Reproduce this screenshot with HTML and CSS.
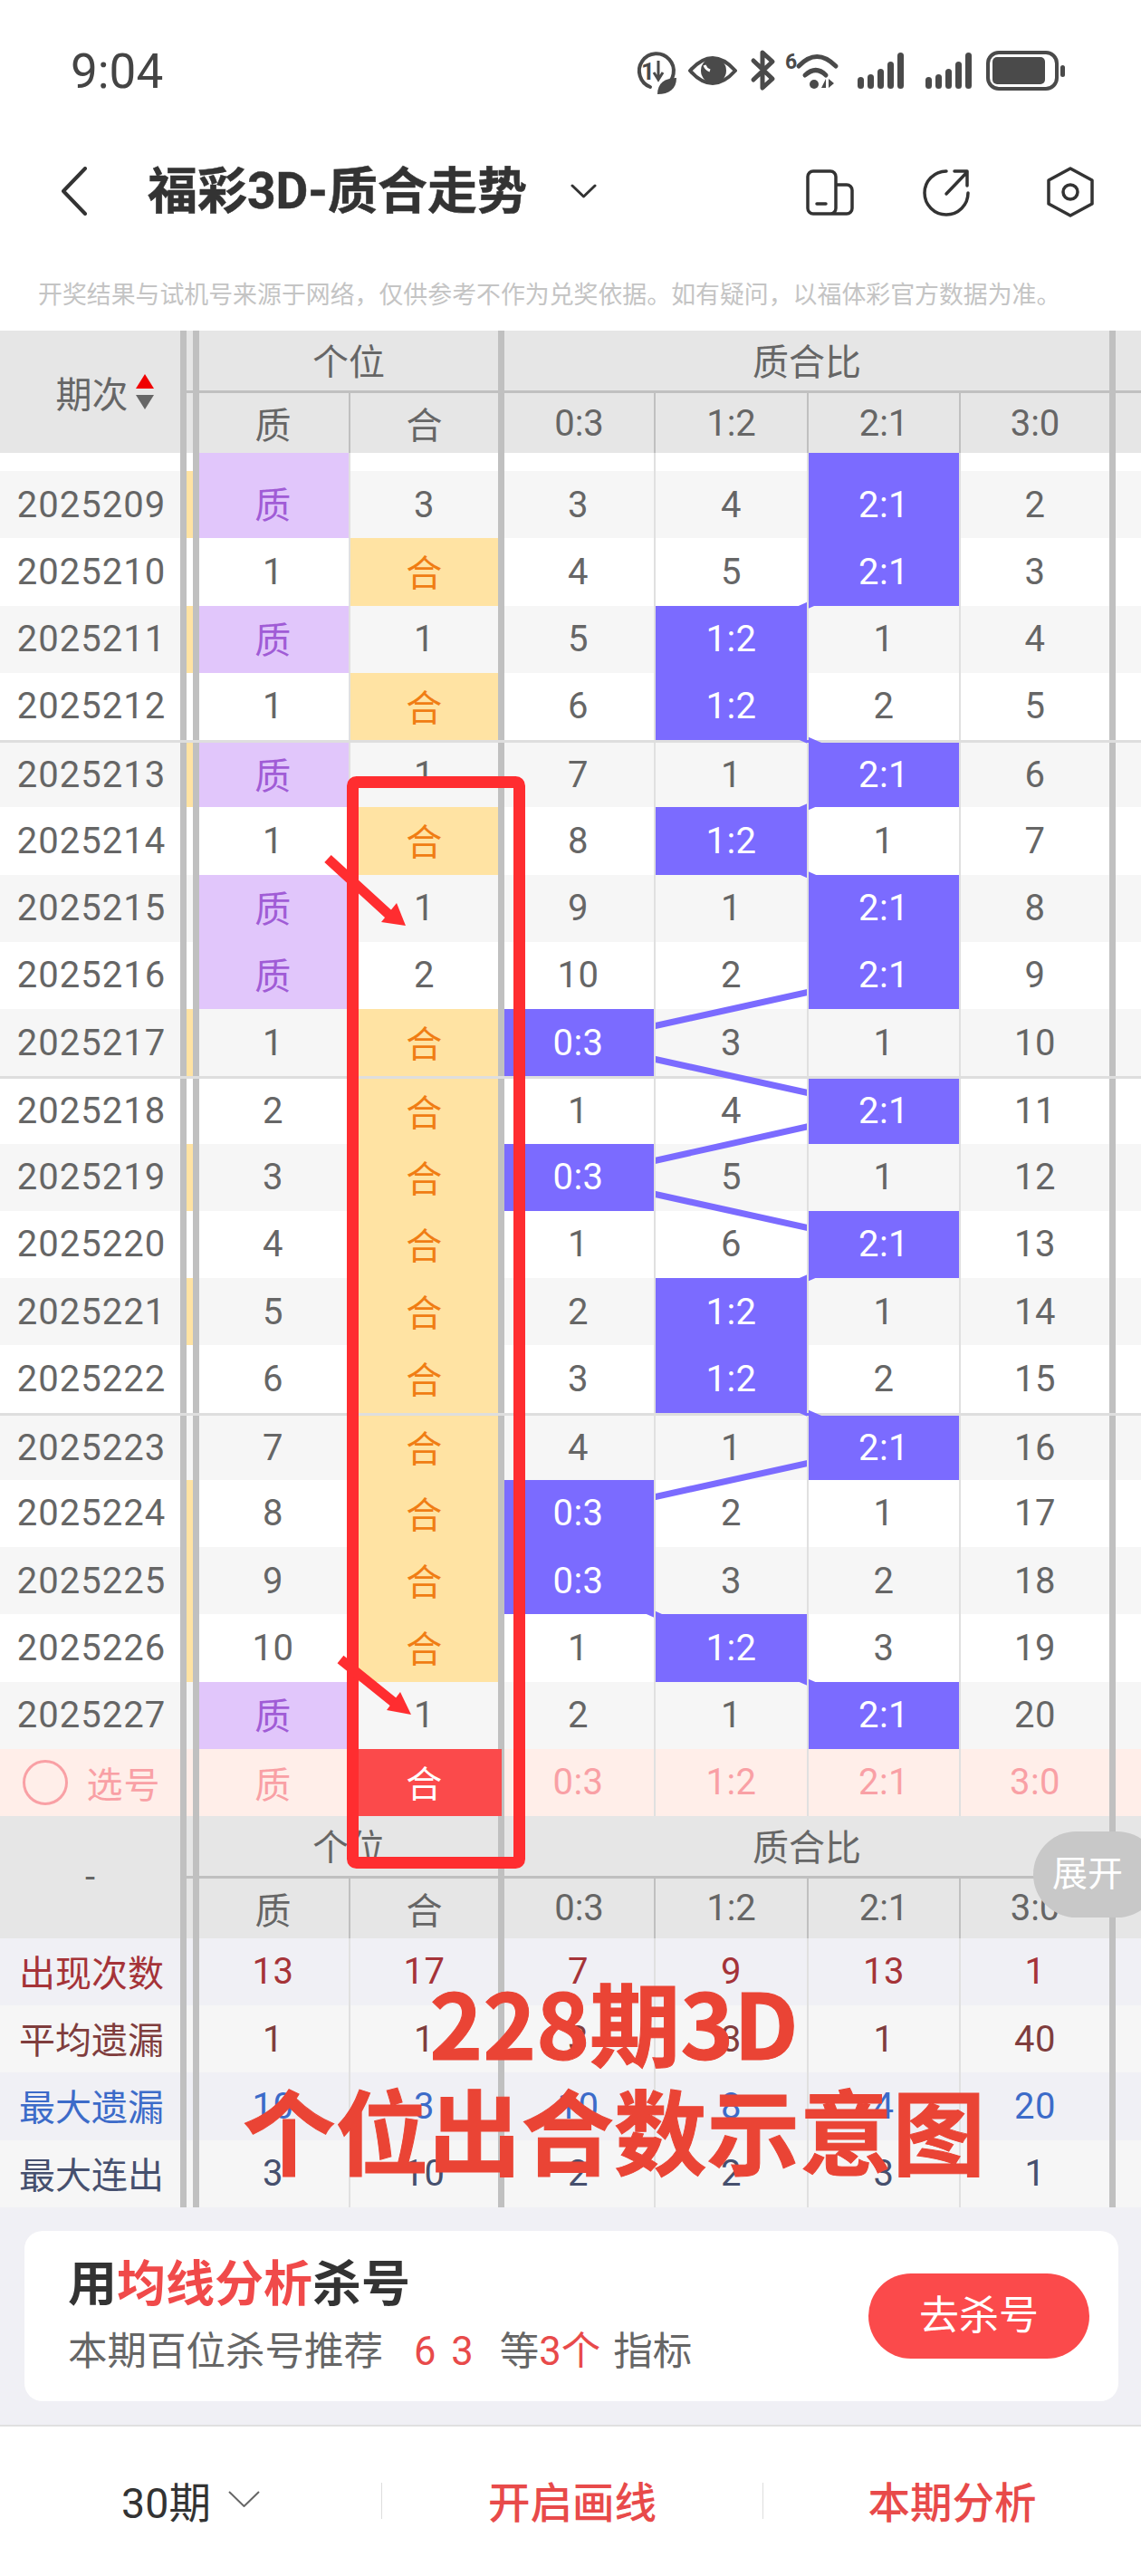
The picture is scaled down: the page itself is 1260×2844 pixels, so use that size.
FILE: index.html
```html
<!doctype html>
<html lang="zh-CN">
	<head>
		<meta charset="UTF-8">
		<title>福彩3D-质合走势</title>
		<link rel="stylesheet" href="styles.css">
	</head>
	<body>
		<div class="page">
			<div class="status">
				<span class="time">9:04</span>
				<svg class="status-icons" width="500" height="65" viewBox="0 0 500 65">
					<path class="st" d="M44 50A19 19 0 1 0 28 51"/>
					<text class="st-txt" x="18" y="43" font-size="26">1</text>
					<path class="st-thin" d="M37 22V42M32 35L37 43L42 35"/>
					<path class="st-fill" d="M36 59C36 47 44 41 57 41C57 53 49 59 36 59Z"/>
					<path class="st" d="M72 33Q97 5 122 33Q97 61 72 33Z"/>
					<circle class="st-fill" cx="98" cy="33" r="14"/>
					<path class="st-gap" d="M88 27A10 10 0 0 0 94 33"/>
					<path class="st st-bold" d="M142 22L163 42L152 52V13L163 23L142 43"/>
					<text class="st-txt" x="177" y="31" font-size="23">6</text>
					<path class="st st-bold" d="M192 28Q212 7 233 28M199 38Q211 27 222 38"/>
					<circle class="st-fill" cx="209" cy="48" r="5"/>
					<path class="st-fill" d="M217 52L222 42V52ZM225 42L231 47L225 52Z"/>
					<rect class="st-fill" x="257" y="40" width="7" height="13" rx="3.5"/>
					<rect class="st-fill" x="268" y="37" width="7" height="16" rx="3.5"/>
					<rect class="st-fill" x="279" y="31" width="7" height="22" rx="3.5"/>
					<rect class="st-fill" x="290" y="23" width="7" height="30" rx="3.5"/>
					<rect class="st-fill" x="301" y="13" width="7" height="40" rx="3.5"/>
					<rect class="st-fill" x="332" y="40" width="7" height="13" rx="3.5"/>
					<rect class="st-fill" x="343" y="37" width="7" height="16" rx="3.5"/>
					<rect class="st-fill" x="354" y="31" width="7" height="22" rx="3.5"/>
					<rect class="st-fill" x="365" y="23" width="7" height="30" rx="3.5"/>
					<rect class="st-fill" x="376" y="13" width="7" height="40" rx="3.5"/>
					<rect class="st" x="401" y="13" width="76" height="40" rx="12"/>
					<rect class="st-fill" x="406" y="18" width="58" height="30" rx="5"/>
					<rect class="st-fill" x="481" y="27" width="5" height="13" rx="2.5"/>
				</svg>
			</div>

			<div class="nav">
				<svg class="back" width="29" height="54" viewBox="0 0 29 54"><path d="M27 2L3 27L27 52"/></svg>
				<span class="title">福彩3D-质合走势</span>
				<svg class="caret" width="29" height="16" viewBox="0 0 29 16"><path d="M2 2L14.5 14L27 2"/></svg>
				<svg class="nav-icons" width="340" height="75" viewBox="0 0 340 75">
					<path d="M43 61H18A6 6 0 0 1 12 55V20A6 6 0 0 1 18 14H37A6 6 0 0 1 43 20V55A6 6 0 0 1 37 61H55A6 6 0 0 0 61 55V35A6 6 0 0 0 55 29H43"/>
					<path d="M22 50H32"/>
					<path d="M165 14A24 24 0 1 0 189 38"/>
					<path d="M165 39L188 15M174 14H188V30"/>
					<path d="M302 11L326 24V50L302 63L278 50V24Z"/>
					<circle cx="302" cy="37" r="8"/>
				</svg>
			</div>

			<div class="notice">开奖结果与试机号来源于网络，仅供参考不作为兑奖依据。如有疑问，以福体彩官方数据为准。</div>

			<div class="thead">
				<div class="th-per th-sort">期次<span class="sort"><i class="up"></i><i class="down"></i></span></div>
				<div class="th-gap hline"></div>
				<div class="th-group th-ge hline">个位</div>
				<div class="th-group th-ratio hline">质合比</div>
				<div class="th-end hline"></div>
				<div class="th-sub th-a">质</div>
				<div class="th-sub th-b">合</div>
				<div class="th-sub th-c">0:3</div>
				<div class="th-sub th-d">1:2</div>
				<div class="th-sub th-e">2:1</div>
				<div class="th-sub th-f">3:0</div>
			</div>

			<div class="tbody">
				<div class="row stub"><div></div><div></div><div class="zhi"></div><div></div><div></div><div></div><div class="hit"></div><div></div></div>
				<div class="row odd"><div>2025209</div><div class="on"></div><div class="zhi">质</div><div>3</div><div>3</div><div>4</div><div class="hit">2:1</div><div>2</div></div>
				<div class="row"><div>2025210</div><div></div><div>1</div><div class="he">合</div><div>4</div><div>5</div><div class="hit">2:1</div><div>3</div></div>
				<div class="row odd"><div>2025211</div><div class="on"></div><div class="zhi">质</div><div>1</div><div>5</div><div class="hit">1:2</div><div>1</div><div>4</div></div>
				<div class="row"><div>2025212</div><div></div><div>1</div><div class="he">合</div><div>6</div><div class="hit">1:2</div><div>2</div><div>5</div></div>
				<div class="row odd sep"><div>2025213</div><div class="on"></div><div class="zhi">质</div><div>1</div><div>7</div><div>1</div><div class="hit">2:1</div><div>6</div></div>
				<div class="row"><div>2025214</div><div></div><div>1</div><div class="he">合</div><div>8</div><div class="hit">1:2</div><div>1</div><div>7</div></div>
				<div class="row odd"><div>2025215</div><div></div><div class="zhi">质</div><div>1</div><div>9</div><div>1</div><div class="hit">2:1</div><div>8</div></div>
				<div class="row"><div>2025216</div><div></div><div class="zhi">质</div><div>2</div><div>10</div><div>2</div><div class="hit">2:1</div><div>9</div></div>
				<div class="row odd"><div>2025217</div><div class="on"></div><div>1</div><div class="he">合</div><div class="hit">0:3</div><div>3</div><div>1</div><div>10</div></div>
				<div class="row sep"><div>2025218</div><div></div><div>2</div><div class="he">合</div><div>1</div><div>4</div><div class="hit">2:1</div><div>11</div></div>
				<div class="row odd"><div>2025219</div><div class="on"></div><div>3</div><div class="he">合</div><div class="hit">0:3</div><div>5</div><div>1</div><div>12</div></div>
				<div class="row"><div>2025220</div><div></div><div>4</div><div class="he">合</div><div>1</div><div>6</div><div class="hit">2:1</div><div>13</div></div>
				<div class="row odd"><div>2025221</div><div class="on"></div><div>5</div><div class="he">合</div><div>2</div><div class="hit">1:2</div><div>1</div><div>14</div></div>
				<div class="row"><div>2025222</div><div></div><div>6</div><div class="he">合</div><div>3</div><div class="hit">1:2</div><div>2</div><div>15</div></div>
				<div class="row odd sep"><div>2025223</div><div></div><div>7</div><div class="he">合</div><div>4</div><div>1</div><div class="hit">2:1</div><div>16</div></div>
				<div class="row"><div>2025224</div><div class="on"></div><div>8</div><div class="he">合</div><div class="hit">0:3</div><div>2</div><div>1</div><div>17</div></div>
				<div class="row odd"><div>2025225</div><div class="on"></div><div>9</div><div class="he">合</div><div class="hit">0:3</div><div>3</div><div>2</div><div>18</div></div>
				<div class="row"><div>2025226</div><div class="on"></div><div>10</div><div class="he">合</div><div>1</div><div class="hit">1:2</div><div>3</div><div>19</div></div>
				<div class="row odd"><div>2025227</div><div></div><div class="zhi">质</div><div>1</div><div>2</div><div>1</div><div class="hit">2:1</div><div>20</div></div>
				<!-- trend line, goes under the cells -->
				<svg class="trend" width="1260" height="1431" viewBox="0 0 1260 1431">
					<polyline points="976,57 976,131 807,206 807,280 976,354 807,428 976,503 976,577 640,651 976,725 640,800 976,874 807,948 807,1023 976,1097 640,1171 640,1245 807,1320 976,1394"/>
				</svg>
			</div>

			<div class="row pick">
				<div><span class="ring"></span>选号</div><div></div><div>质</div><div class="picked">合</div><div>0:3</div><div>1:2</div><div>2:1</div><div>3:0</div>
			</div>

			<div class="thead">
				<div class="th-per">-</div>
				<div class="th-gap hline"></div>
				<div class="th-group th-ge hline">个位</div>
				<div class="th-group th-ratio hline">质合比</div>
				<div class="th-end hline"></div>
				<div class="th-sub th-a">质</div>
				<div class="th-sub th-b">合</div>
				<div class="th-sub th-c">0:3</div>
				<div class="th-sub th-d">1:2</div>
				<div class="th-sub th-e">2:1</div>
				<div class="th-sub th-f">3:0</div>
			</div>

			<div class="row stat s-red"><div>出现次数</div><div></div><div>13</div><div>17</div><div>7</div><div>9</div><div>13</div><div>1</div></div>
			<div class="row stat odd s-brown"><div>平均遗漏</div><div></div><div>1</div><div>1</div><div>3</div><div>3</div><div>1</div><div>40</div></div>
			<div class="row stat s-blue"><div>最大遗漏</div><div></div><div>10</div><div>3</div><div>10</div><div>8</div><div>4</div><div>20</div></div>
			<div class="row stat odd s-slate"><div>最大连出</div><div></div><div>3</div><div>10</div><div>2</div><div>2</div><div>3</div><div>1</div></div>

			<div class="promo">
				<div class="card">
					<div class="card-text">
						<div class="card-title">用<em>均线分析</em>杀号</div>
						<div class="card-sub">本期百位杀号推荐<b class="nums">6 3</b>等<b>3个</b><span class="tail">指标</span></div>
					</div>
					<div class="go">去杀号</div>
				</div>
			</div>

			<div class="bar">
				<div class="bar-item bar-period">30期<svg width="35" height="18" viewBox="0 0 35 18"><path d="M1 1L17.5 17L34 1"/></svg></div>
				<div class="bar-item bar-red">开启画线</div>
				<div class="bar-item bar-red">本期分析</div>
			</div>

			<div class="expand">展开</div>

			<!-- hand drawn marks on top of the screenshot -->
			<svg class="marks" width="1260" height="2844" viewBox="0 0 1260 2844">
				<rect x="389.5" y="863.5" width="184" height="1193" rx="4"/>
				<path class="shaft" d="M362 948L432 1012M376 1832L438 1882"/>
				<polygon points="438,997 448,1022 421,1018"/>
				<polygon points="442,1868 454,1893 427,1888"/>
			</svg>
			<div class="bigtext">228期3D<br><span class="bigline">个位出合数示意图</span></div>
		</div>
	</body>
</html>
```

FILE: styles.css
```css
*
{
	box-sizing: border-box;
}
body
{
	margin: 0;
	background: #ffffff;
	font-family: Roboto, "Noto Sans CJK SC", sans-serif;
	color: #666666;
}
.page
{
	position: relative;
	width: 1260px;
	height: 2844px;
	overflow: hidden;
	background: #f0f0f5;
}

/* status bar */
.status
{
	display: flex;
	justify-content: space-between;
	height: 158px;
	padding: 45px 70px 0 78px;
	background: #ffffff;
}
.time
{
	margin-top: 6px;
	font-size: 53px;
	line-height: 56px;
	color: #444444;
}
.st
{
	fill: none;
	stroke: #4a4a4a;
	stroke-width: 4;
	stroke-linecap: round;
	stroke-linejoin: round;
}
.st-bold
{
	stroke-width: 5;
}
.st-thin
{
	fill: none;
	stroke: #4a4a4a;
	stroke-width: 3;
}
.st-fill
{
	fill: #4a4a4a;
}
.st-gap
{
	fill: none;
	stroke: #ffffff;
	stroke-width: 3;
}
.st-txt
{
	fill: #4a4a4a;
	font-weight: 700;
	font-family: Roboto, sans-serif;
}

/* title */
.nav
{
	display: flex;
	align-items: center;
	height: 106px;
	padding: 0 40px 0 67px;
	background: #ffffff;
}
.nav svg path, .nav svg circle
{
	fill: none;
	stroke: #333333;
	stroke-linecap: round;
	stroke-linejoin: round;
}
.back path
{
	stroke-width: 4;
}
.caret path
{
	stroke-width: 3;
}
.nav-icons path, .nav-icons circle
{
	stroke-width: 3.5;
}
.title
{
	margin-left: 67px;
	font-size: 55px;
	font-weight: 700;
	line-height: 64px;
	color: #333333;
	-webkit-text-stroke: 0.5px #333333;
}
.caret
{
	margin-left: 48px;
}
.nav-icons
{
	margin-left: auto;
	margin-top: 3px;
}
.notice
{
	height: 101px;
	padding: 44px 0 0 42px;
	font-size: 26.9px;
	line-height: 36px;
	color: #c4c4c4;
	background: #ffffff;
}

/* table head, same columns as .row */
.thead
{
	display: grid;
	grid-template-columns: 206px 7px 174px 163px 174px 169px 168px 171px 28px;
	grid-template-rows: 69px 66px;
	height: 135px;
	background: #e6e6e6;
	font-size: 40px;
	color: #666666;
}
.thead div
{
	display: flex;
	align-items: center;
	justify-content: center;
}
.th-per
{
	grid-row: 1 / 3;
	border-right: 7px solid #c0c0c0;
}
.th-sort
{
	padding-left: 32px;
}
.hline
{
	background: linear-gradient(#c0c0c0, #c0c0c0) bottom / 100% 3px no-repeat;
	padding-bottom: 5px;
}
.th-ge
{
	grid-column: 3 / 5;
	border-left: 7px solid #c0c0c0;
	border-right: 7px solid #c0c0c0;
	margin-right: -7px;
}
.th-ratio
{
	grid-column: 5 / 9;
	padding-left: 7px;
	border-right: 7px solid #c0c0c0;
}
.th-sub
{
	grid-row: 2;
}
.th-a
{
	grid-column: 3;
	border-left: 7px solid #c0c0c0;
	border-right: 2px solid #c0c0c0;
	padding-right: 2px;
}
.th-b
{
	grid-column: 4;
}
.th-c
{
	grid-column: 5;
	border-left: 7px solid #c0c0c0;
	border-right: 2px solid #c0c0c0;
}
.th-d
{
	grid-column: 6;
	border-right: 2px solid #c0c0c0;
}
.th-e
{
	grid-column: 7;
	border-right: 2px solid #c0c0c0;
}
.th-f
{
	grid-column: 8;
	border-right: 7px solid #c0c0c0;
}
.sort
{
	display: inline-flex;
	flex-direction: column;
	gap: 7px;
	margin-left: 8px;
}
.sort i
{
	display: block;
	border-left: 10px solid transparent;
	border-right: 10px solid transparent;
}
.sort .up
{
	border-bottom: 16px solid #f00000;
}
.sort .down
{
	border-top: 16px solid #666666;
}

/* rows */
.tbody
{
	position: relative;
}
.row
{
	display: grid;
	grid-template-columns: 206px 7px 174px 163px 174px 169px 168px 171px;
	width: 1260px;
	height: 74.26px;
	background: #ffffff;
	font-size: 40px;
	letter-spacing: 0.5px;
}
.row.odd
{
	background: #f6f6f6;
}
.row.sep
{
	border-top: 3px solid #dedede;
}
.row.stub
{
	height: 20px;
}
.row > div
{
	position: relative;
	z-index: 2;
	display: flex;
	align-items: center;
	justify-content: center;
}
.row > div:nth-child(1)
{
	padding-left: 3px;
	border-right: 7px solid #c0c0c0;
	letter-spacing: 1px;
}
.row > div:nth-child(3), .row > div:nth-child(5)
{
	padding-right: 2px;
	border-left: 7px solid #c0c0c0;
	border-right: 2px solid #e0e0e0;
}
.row > div:nth-child(6), .row > div:nth-child(7)
{
	border-right: 2px solid #e0e0e0;
}
.row > div:nth-child(8)
{
	border-right: 7px solid #c0c0c0;
}
.row .on
{
	background: #ffe3a3;
}
.row .zhi
{
	padding-bottom: 4px;
	background: #e1c6fb padding-box;
	color: #a05cd6;
}
.row .he
{
	padding-bottom: 2px;
	background: #ffe3a3;
	color: #f07d14;
}
.row .hit
{
	background: #7b6bff padding-box;
	color: #ffffff;
}
.trend
{
	position: absolute;
	left: 0;
	top: 0;
	z-index: 1;
}
.trend polyline
{
	fill: none;
	stroke: #7b6bff;
	stroke-width: 7;
}

/* pick row */
.row.pick
{
	height: 74px;
	background: #ffeee9;
	color: #f9a0a5;
}
.ring
{
	width: 50px;
	height: 50px;
	margin-right: 21px;
	border: 3px solid #f9a0a5;
	border-radius: 50%;
}
.row .picked
{
	z-index: 3;
	margin-right: -4px;
	padding-right: 4px;
	padding-bottom: 2px;
	background: #fb4a4b;
	color: #ffffff;
}

/* stats */
.row.stat
{
	height: 74.25px;
	background: #f0f0f5;
}
.row.stat.odd
{
	background: #f6f6f6;
}
.row.stat > div:nth-child(1)
{
	padding-bottom: 2px;
	letter-spacing: 0;
}
.s-red
{
	color: #a53338;
}
.s-brown
{
	color: #7f3d3d;
}
.s-blue
{
	color: #3c6bc9;
}
.s-slate
{
	color: #46506e;
}

/* kill number card */
.promo
{
	height: 240px;
	padding: 26px 25px 26px 27px;
}
.card
{
	display: flex;
	align-items: center;
	justify-content: space-between;
	height: 188px;
	padding: 0 32px 0 48px;
	border-radius: 20px;
	background: #ffffff;
}
.card-text
{
	display: flex;
	flex-direction: column;
	gap: 9px;
	padding-top: 2px;
}
.card-title
{
	font-size: 54px;
	font-weight: 700;
	line-height: 70px;
	color: #333333;
}
.card-title em
{
	font-style: normal;
	color: #f04a4a;
}
.card-sub
{
	font-size: 43.5px;
	line-height: 60px;
	color: #666666;
}
.card-sub b
{
	font-weight: 400;
	color: #e84a4a;
}
.card-sub .nums
{
	margin: 0 29px 0 34px;
	word-spacing: 6px;
}
.tail
{
	margin-left: 14px;
}
.go
{
	width: 244px;
	height: 94px;
	border-radius: 47px;
	background: #fb4a4b;
	font-size: 44px;
	line-height: 94px;
	text-align: center;
	color: #ffffff;
}

/* bottom bar */
.bar
{
	display: grid;
	grid-template-columns: 421px 421px 418px;
	align-items: center;
	height: 167px;
	border-top: 2px solid #e0e0e0;
	background: #ffffff;
}
.bar-item
{
	display: flex;
	align-items: center;
	justify-content: center;
	height: 40px;
	padding-bottom: 4px;
	font-size: 46.5px;
}
.bar-item + .bar-item
{
	border-left: 1px solid #dddddd;
}
.bar-period
{
	gap: 19px;
	color: #333333;
}
.bar-period path
{
	fill: none;
	stroke: #666666;
	stroke-width: 2;
}
.bar-red
{
	font-weight: 500;
	color: #e84a4a;
}

/* things on top */
.expand
{
	position: absolute;
	left: 1141px;
	top: 2022px;
	z-index: 4;
	width: 140px;
	height: 95px;
	padding-left: 21px;
	border-radius: 48px;
	background: #c8c8c8;
	font-size: 39px;
	line-height: 95px;
	color: #ffffff;
}
.marks
{
	position: absolute;
	left: 0;
	top: 0;
	z-index: 5;
}
.marks rect
{
	fill: none;
	stroke: #ff2d30;
	stroke-width: 13;
}
.marks .shaft
{
	fill: none;
	stroke: #ff2d30;
	stroke-width: 11;
}
.marks polygon
{
	fill: #ff2d30;
}
.bigtext
{
	position: absolute;
	left: 178px;
	top: 2171px;
	z-index: 6;
	width: 1000px;
	font-size: 100px;
	font-weight: 700;
	line-height: 119px;
	text-align: center;
	color: #ea4435;
	font-family: "Noto Sans CJK SC", sans-serif;
	-webkit-text-stroke: 1px #ea4435;
}
.bigline
{
	font-size: 102.5px;
}
```
